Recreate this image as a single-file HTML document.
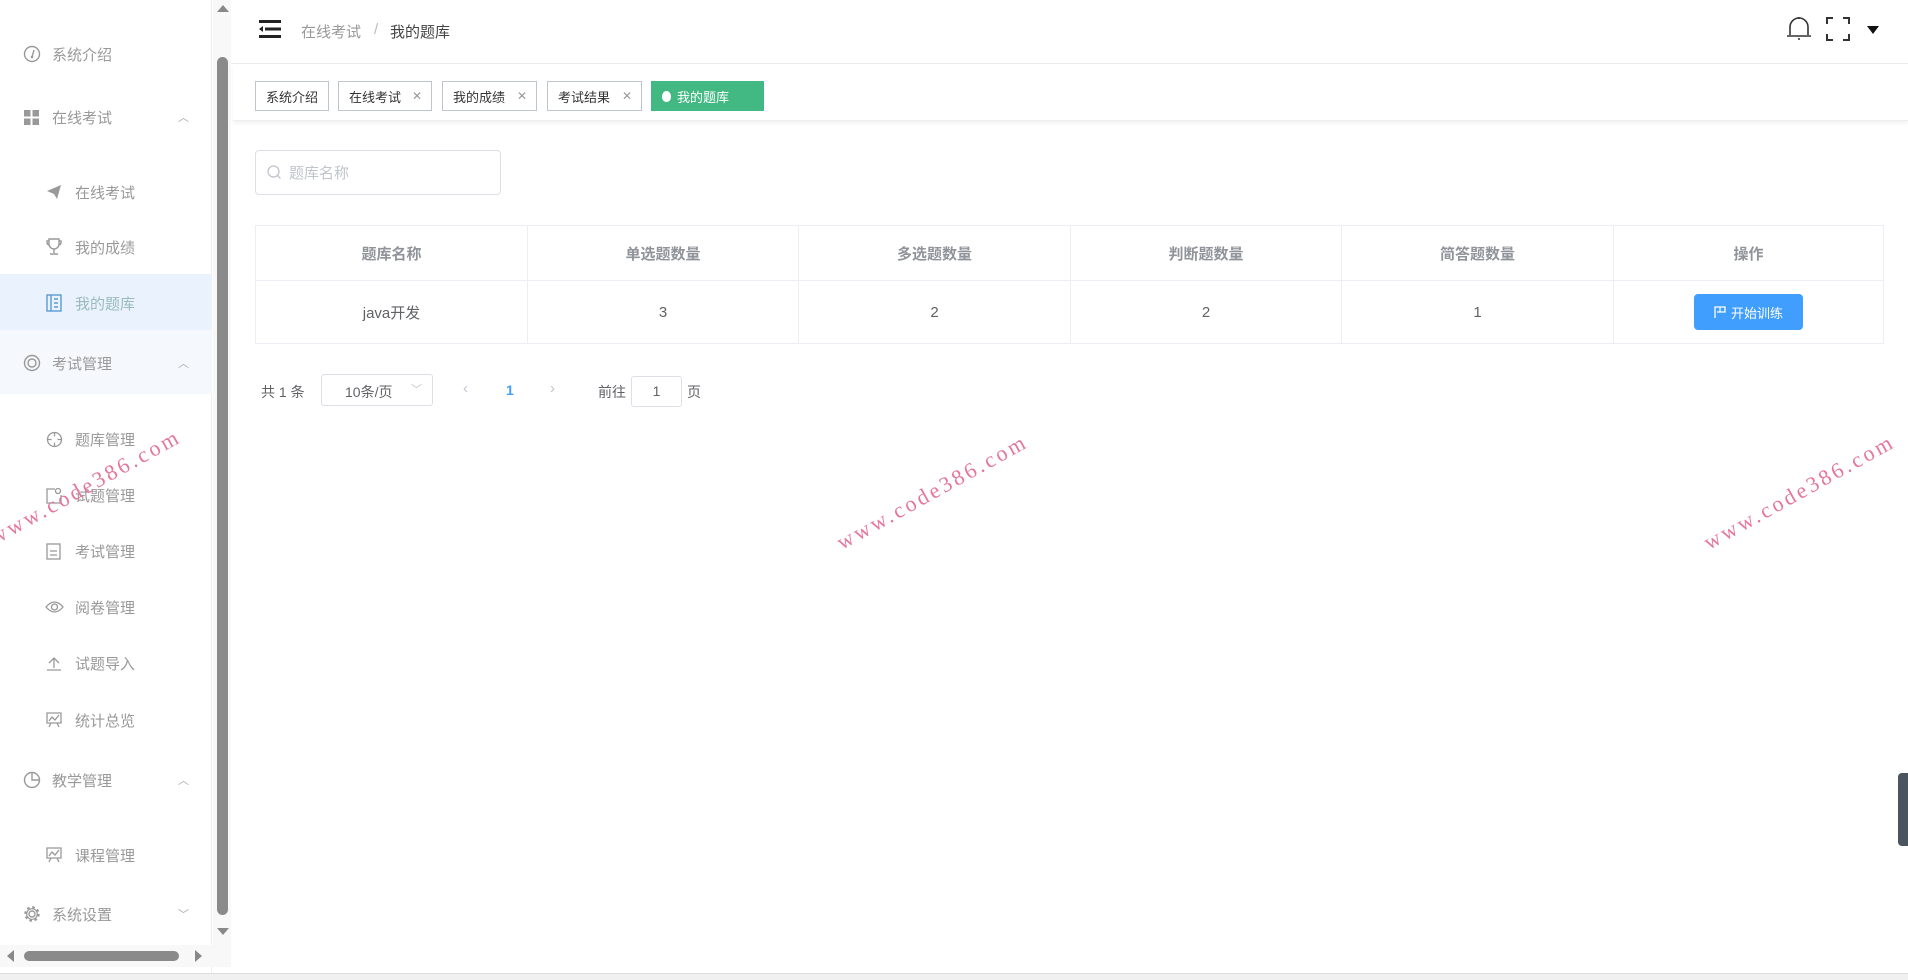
<!DOCTYPE html>
<html><head><meta charset="utf-8">
<style>
*{margin:0;padding:0;box-sizing:border-box}
body{width:1908px;height:980px;overflow:hidden;background:#fff;font-family:"Liberation Sans","Noto Sans CJK SC",sans-serif;position:relative;color:#606266}
.abs{position:absolute}
.side{left:0;top:0;width:212px;height:975px;background:#fff;border-right:1px solid #eee}
.mi{position:absolute;left:0;width:212px;font-size:15px;color:#999;display:flex;align-items:center}
.mi svg{position:absolute}
.mi .t{position:absolute;left:52px}
.mi.sub .t{left:75px}
.car{position:absolute;left:178px;font-size:11px;color:#aaa}
.tag{position:absolute;top:81px;height:30px;border:1px solid #c0c4cc;background:#fff;font-size:13px;color:#333;display:flex;align-items:center;padding-left:10px}
.tag .x{position:absolute;right:9px;color:#999;font-size:12px}
th,td{border:1px solid #ebeef5;text-align:center}
th{height:55px;font-size:15px;color:#909399;font-weight:bold}
td{height:63px;font-size:15px;color:#606266}
.wm{position:absolute;font-family:"Liberation Serif",serif;font-size:22px;color:#e5789a;letter-spacing:3px;transform:rotate(-29deg);transform-origin:center;white-space:nowrap}
</style></head><body>
<!-- sidebar -->
<div class="abs side"></div>
<div class="abs" style="left:0;top:274px;width:212px;height:56px;background:#eaf3fd"></div>
<div class="abs" style="left:0;top:330px;width:212px;height:64px;background:#f5f9fd"></div>

<div class="mi" style="top:44px;height:20px">
<svg style="left:23px" width="18" height="18" viewBox="0 0 18 18"><circle cx="9" cy="9" r="7.5" fill="none" stroke="#999" stroke-width="1.4"/><path d="M9 12 L11 5" stroke="#999" stroke-width="1.4"/><circle cx="9" cy="12" r="1.3" fill="#999"/></svg>
<span class="t">系统介绍</span></div>
<div class="mi" style="top:107px;height:20px">
<svg style="left:24px" width="16" height="16" viewBox="0 0 16 16"><rect x="0" y="1" width="6.5" height="6.5" fill="#999"/><rect x="8.5" y="1" width="6.5" height="6.5" fill="#999"/><rect x="0" y="9.5" width="6.5" height="6.5" fill="#999"/><rect x="8.5" y="9.5" width="6.5" height="6.5" fill="#999"/></svg>
<span class="t">在线考试</span><span class="car">︿</span></div>
<div class="mi sub" style="top:182px;height:20px">
<svg style="left:46px" width="16" height="16" viewBox="0 0 16 16"><path d="M1 7 L15 1 L11 15 L8 10 Z" fill="#999"/></svg>
<span class="t">在线考试</span></div>
<div class="mi sub" style="top:237px;height:20px">
<svg style="left:46px" width="16" height="18" viewBox="0 0 16 18"><path d="M3 1h10v5a5 5 0 0 1-10 0z M3 3H1v2a3 3 0 0 0 2 2 M13 3h2v2a3 3 0 0 1-2 2 M8 11v4 M4 16h8" fill="none" stroke="#999" stroke-width="1.4"/></svg>
<span class="t">我的成绩</span></div>
<div class="mi sub" style="top:293px;height:20px">
<svg style="left:46px" width="16" height="18" viewBox="0 0 16 18"><rect x="1" y="1" width="14" height="16" fill="none" stroke="#5a9bd5" stroke-width="1.4"/><path d="M5 1v16 M8 5h4 M8 9h4 M8 13h4" stroke="#5a9bd5" stroke-width="1.4"/></svg>
<span class="t" style="color:#9bb">我的题库</span></div>
<div class="mi" style="top:353px;height:20px">
<svg style="left:23px" width="18" height="18" viewBox="0 0 18 18"><circle cx="9" cy="9" r="7.5" fill="none" stroke="#999" stroke-width="1.4"/><circle cx="9" cy="9" r="4" fill="none" stroke="#999" stroke-width="1.4"/></svg>
<span class="t">考试管理</span><span class="car">︿</span></div>
<div class="mi sub" style="top:429px;height:20px">
<svg style="left:46px" width="17" height="17" viewBox="0 0 17 17"><circle cx="8.5" cy="8.5" r="7" fill="none" stroke="#999" stroke-width="1.3"/><path d="M8.5 1.5v4 M8.5 11.5v4 M1.5 8.5h4 M11.5 8.5h4" stroke="#999" stroke-width="1.3"/></svg>
<span class="t">题库管理</span></div>
<div class="mi sub" style="top:485px;height:20px">
<svg style="left:46px" width="17" height="17" viewBox="0 0 17 17"><path d="M9 2H1v14h14V8" fill="none" stroke="#999" stroke-width="1.3"/><circle cx="12" cy="4" r="2.5" fill="none" stroke="#999" stroke-width="1.3"/></svg>
<span class="t">试题管理</span></div>
<div class="mi sub" style="top:541px;height:20px">
<svg style="left:46px" width="16" height="17" viewBox="0 0 16 17"><rect x="1" y="1" width="13" height="15" fill="none" stroke="#999" stroke-width="1.3"/><path d="M4 8h7 M4 12h7" stroke="#999" stroke-width="1.3"/></svg>
<span class="t">考试管理</span></div>
<div class="mi sub" style="top:597px;height:20px">
<svg style="left:45px" width="19" height="14" viewBox="0 0 19 14"><path d="M1 7 Q9.5 -3 18 7 Q9.5 17 1 7Z" fill="none" stroke="#999" stroke-width="1.3"/><circle cx="9.5" cy="7" r="3" fill="none" stroke="#999" stroke-width="1.3"/></svg>
<span class="t">阅卷管理</span></div>
<div class="mi sub" style="top:653px;height:20px">
<svg style="left:46px" width="16" height="16" viewBox="0 0 16 16"><path d="M8 13V3 M3 8l5-5 5 5 M1 15h14" fill="none" stroke="#999" stroke-width="1.3"/></svg>
<span class="t">试题导入</span></div>
<div class="mi sub" style="top:710px;height:20px">
<svg style="left:46px" width="16" height="16" viewBox="0 0 16 16"><path d="M1 1h14v10H1z M3 9l3-4 3 3 4-5 M5 11l-2 4 M11 11l2 4" fill="none" stroke="#999" stroke-width="1.3"/></svg>
<span class="t">统计总览</span></div>
<div class="mi" style="top:770px;height:20px">
<svg style="left:23px" width="18" height="18" viewBox="0 0 18 18"><circle cx="9" cy="9" r="7.5" fill="none" stroke="#999" stroke-width="1.4"/><path d="M9 1.5V9H16.5" fill="none" stroke="#999" stroke-width="1.4"/></svg>
<span class="t">教学管理</span><span class="car">︿</span></div>
<div class="mi sub" style="top:845px;height:20px">
<svg style="left:46px" width="16" height="16" viewBox="0 0 16 16"><path d="M1 1h14v10H1z M3 9l3-4 3 3 4-5 M5 11l-2 4 M11 11l2 4" fill="none" stroke="#999" stroke-width="1.3"/></svg>
<span class="t">课程管理</span></div>
<div class="mi" style="top:904px;height:20px">
<svg style="left:23px" width="18" height="18" viewBox="0 0 18 18"><circle cx="9" cy="9" r="3" fill="none" stroke="#999" stroke-width="1.4"/><circle cx="9" cy="9" r="6.5" fill="none" stroke="#999" stroke-width="2.5" stroke-dasharray="2.5 2.6"/><circle cx="9" cy="9" r="5.3" fill="none" stroke="#999" stroke-width="1.2"/></svg>
<span class="t">系统设置</span><span class="car">﹀</span></div>

<!-- vertical scrollbar -->
<div class="abs" style="left:213px;top:0;width:18px;height:945px;background:#f8f8f8"></div>
<div class="abs" style="left:217px;top:57px;width:11px;height:858px;background:#8a8a8a;border-radius:6px"></div>
<div class="abs" style="left:217px;top:5px;width:0;height:0;border-left:6px solid transparent;border-right:6px solid transparent;border-bottom:7px solid #888"></div>
<div class="abs" style="left:217px;top:928px;width:0;height:0;border-left:6px solid transparent;border-right:6px solid transparent;border-top:7px solid #888"></div>
<!-- horizontal scrollbar -->
<div class="abs" style="left:0;top:945px;width:231px;height:22px;background:#f8f8f8"></div>
<div class="abs" style="left:24px;top:951px;width:155px;height:10px;background:#8a8a8a;border-radius:5px"></div>
<div class="abs" style="left:7px;top:950px;width:0;height:0;border-top:6px solid transparent;border-bottom:6px solid transparent;border-right:7px solid #888"></div>
<div class="abs" style="left:195px;top:950px;width:0;height:0;border-top:6px solid transparent;border-bottom:6px solid transparent;border-left:7px solid #888"></div>
<div class="abs" style="left:0;top:973px;width:1908px;height:7px;background:#f0f0f0;border-top:1px solid #ddd"></div>

<!-- header -->
<div class="abs" style="left:231px;top:0;width:1677px;height:64px;background:#fff;border-bottom:1px solid #ececec"></div>
<svg class="abs" style="left:259px;top:20px" width="22" height="18" viewBox="0 0 22 18"><rect x="0" y="0" width="22" height="3" fill="#222"/><rect x="6" y="7.5" width="16" height="3" fill="#222"/><rect x="0" y="15" width="22" height="3" fill="#222"/><path d="M0 9l4-3v6z" fill="#222"/></svg>
<div class="abs" style="left:301px;top:21px;font-size:15px;color:#999">在线考试</div>
<div class="abs" style="left:374px;top:21px;font-size:15px;color:#bbb">/</div>
<div class="abs" style="left:390px;top:21px;font-size:15px;color:#444">我的题库</div>
<svg class="abs" style="left:1786px;top:15px" width="26" height="28" viewBox="0 0 26 28"><path d="M4 20V12a9 9 0 0 1 18 0v8 M1 21h24" fill="none" stroke="#333" stroke-width="1.6"/><path d="M13 2v2" stroke="#333" stroke-width="1.6"/><circle cx="13" cy="24" r="1" fill="#333"/></svg>
<svg class="abs" style="left:1826px;top:17px" width="24" height="24" viewBox="0 0 24 24"><path d="M1 7V1h6 M17 1h6v6 M23 17v6h-6 M7 23H1v-6" fill="none" stroke="#333" stroke-width="2"/></svg>
<div class="abs" style="left:1867px;top:26px;width:0;height:0;border-left:6px solid transparent;border-right:6px solid transparent;border-top:8px solid #111"></div>

<!-- tags bar -->
<div class="abs" style="left:233px;top:65px;width:1675px;height:56px;background:#fff;box-shadow:0 2px 4px rgba(0,0,0,.06);border-bottom:1px solid #eee"></div>
<div class="tag" style="left:255px;width:74px">系统介绍</div>
<div class="tag" style="left:338px;width:94px">在线考试<span class="x">✕</span></div>
<div class="tag" style="left:442px;width:95px">我的成绩<span class="x">✕</span></div>
<div class="tag" style="left:547px;width:95px">考试结果<span class="x">✕</span></div>
<div class="tag" style="left:651px;width:113px;background:#42b983;border-color:#42b983;color:#fff"><span style="display:inline-block;width:9px;height:11px;background:#fff;border-radius:50% 50% 45% 45%;margin-right:6px"></span>我的题库</div>

<!-- search -->
<div class="abs" style="left:255px;top:150px;width:246px;height:45px;border:1px solid #dcdfe6;border-radius:4px"></div>
<svg class="abs" style="left:267px;top:165px" width="15" height="15" viewBox="0 0 15 15"><circle cx="6.5" cy="6.5" r="5.5" fill="none" stroke="#c0c4cc" stroke-width="1.3"/><path d="M10.5 10.5l3 3" stroke="#c0c4cc" stroke-width="1.3"/></svg>
<div class="abs" style="left:289px;top:162px;font-size:15px;color:#c0c4cc">题库名称</div>

<!-- table -->
<table class="abs" style="left:255px;top:225px;width:1629px;border-collapse:collapse">
<tr><th style="width:272px">题库名称</th><th style="width:271px">单选题数量</th><th style="width:272px">多选题数量</th><th style="width:271px">判断题数量</th><th style="width:272px">简答题数量</th><th>操作</th></tr>
<tr><td>java开发</td><td>3</td><td>2</td><td>2</td><td>1</td><td><span style="display:inline-flex;align-items:center;justify-content:center;width:109px;height:36px;background:#409eff;border-radius:4px;color:#fff;font-size:13px"><svg width="12" height="12" viewBox="0 0 12 12" style="margin-right:5px"><path d="M1 12V1h10v5H3" fill="none" stroke="#fff" stroke-width="1.3"/><path d="M6 1v5" stroke="#fff" stroke-width="1.2"/></svg>开始训练</span></td></tr>
</table>

<!-- pagination -->
<div class="abs" style="left:261px;top:382px;font-size:14px;color:#606266">共 1 条</div>
<div class="abs" style="left:321px;top:374px;width:112px;height:32px;border:1px solid #dcdfe6;border-radius:3px;font-size:14px;color:#606266;padding:7px 0 0 23px">10条/页<span style="position:absolute;right:10px;top:6px;color:#c0c4cc;font-size:11px">﹀</span></div>
<div class="abs" style="left:463px;top:380px;font-size:15px;color:#c0c4cc">‹</div>
<div class="abs" style="left:506px;top:382px;font-size:14px;color:#409eff;font-weight:bold">1</div>
<div class="abs" style="left:550px;top:380px;font-size:15px;color:#c0c4cc">›</div>
<div class="abs" style="left:598px;top:382px;font-size:14px;color:#606266">前往</div>
<div class="abs" style="left:631px;top:376px;width:51px;height:31px;border:1px solid #dcdfe6;border-radius:3px;font-size:14px;color:#606266;text-align:center;padding-top:6px">1</div>
<div class="abs" style="left:687px;top:382px;font-size:14px;color:#606266">页</div>

<!-- watermarks -->
<div class="wm" style="left:-22px;top:474px">www.code386.com</div>
<div class="wm" style="left:825px;top:479px">www.code386.com</div>
<div class="wm" style="left:1692px;top:479px">www.code386.com</div>

<!-- right widget -->
<div class="abs" style="left:1898px;top:773px;width:10px;height:73px;background:#4a5560;border-radius:4px 0 0 4px"></div>
</body></html>
